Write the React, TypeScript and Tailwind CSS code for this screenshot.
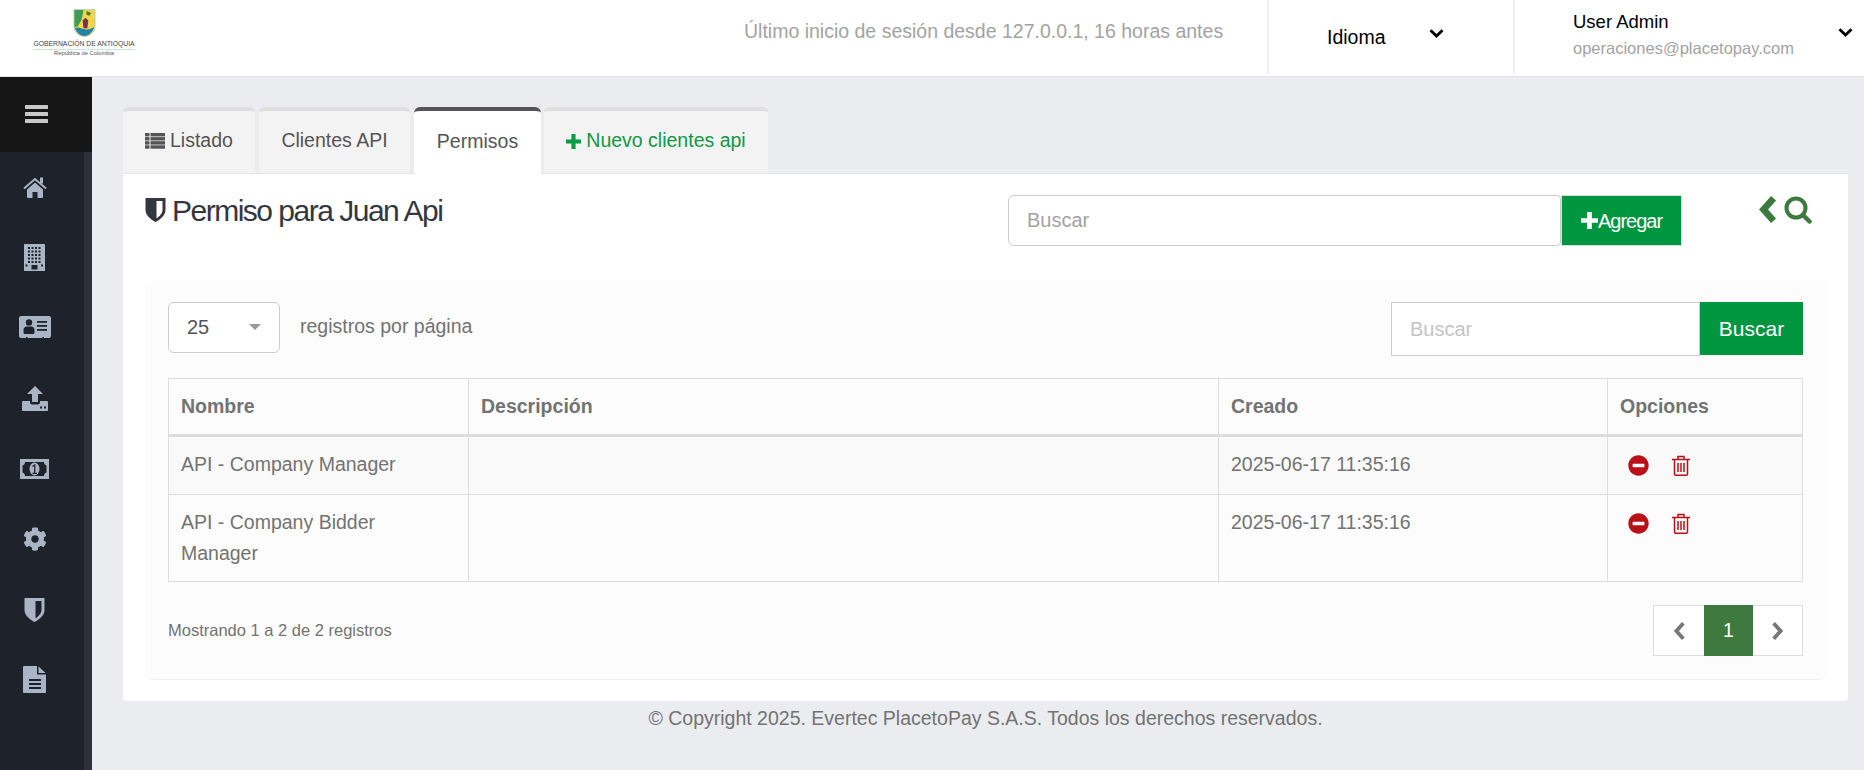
import { FaCog, FaMinusCircle } from 'react-icons/fa'

const rows = [
  { name: 'API - Company Manager', created: '2025-06-17 11:35:16' },
  { name: 'API - Company Bidder Manager', created: '2025-06-17 11:35:16' },
]

const SIDE = '#a9b4c4'
const SIDE_BG = '#1e222b'

const BarsIcon = () => (
  <svg viewBox="0 0 23 18" className="w-[23px] h-[18px] fill-[#c8c8c8]">
    <rect y="0" width="23" height="4" rx="0.500" />
    <rect y="7" width="23" height="4" rx="0.500" />
    <rect y="14" width="23" height="4" rx="0.500" />
  </svg>
)

const HomeIcon = () => (
  <svg viewBox="0 0 24 21" className="w-[24px] h-[21px]" fill={SIDE}>
    <path d="M4 12.500L12 5.500l8 7V20a1 1 0 0 1-1 1h-4.500v-6h-5v6H5a1 1 0 0 1-1-1z" />
    <path d="M1 11.500L12 2l11 9.500" fill="none" stroke={SIDE} strokeWidth="1.900" />
    <rect x="17" y="0.500" width="3" height="6" />
  </svg>
)

const BuildingIcon = () => (
  <svg viewBox="0 0 21 27" className="w-[21px] h-[27px]">
    <rect width="21" height="27" rx="0.500" fill={SIDE} />
    {[3, 6.500, 10, 13.500, 17].map((y) =>
      [4, 7.500, 11, 14.500].map((x) => (
        <rect key={`${x}-${y}`} x={x} y={y} width="2" height="2" fill={SIDE_BG} />
      )),
    )}
    <rect x="1.500" y="20.500" width="2" height="2" fill={SIDE_BG} />
    <rect x="17" y="20.500" width="2" height="2" fill={SIDE_BG} />
    <rect x="7.500" y="21" width="6" height="4.500" fill={SIDE_BG} />
  </svg>
)

const IdCardIcon = () => (
  <svg viewBox="0 0 32 23" className="w-[32px] h-[23px]">
    <path d="M2 0h28a2 2 0 0 1 2 2v18a2 2 0 0 1-2 2h-5v-1h-1.500v1H8.500v-1H7v1H2a2 2 0 0 1-2-2V2a2 2 0 0 1 2-2z" fill={SIDE} />
    <circle cx="10" cy="6.500" r="3.200" fill={SIDE_BG} />
    <path d="M4.500 16.500v-2.500c0-2 1.500-3.500 3-3.500h5c1.500 0 3 1.500 3 3.500v2.500a1.500 1.500 0 0 1-1.500 1.500H6a1.500 1.500 0 0 1-1.500-1.500z" fill={SIDE_BG} />
    <rect x="18" y="5" width="10" height="1.800" fill={SIDE_BG} />
    <rect x="18" y="9" width="10" height="1.800" fill={SIDE_BG} />
    <rect x="18" y="13" width="10" height="1.800" fill={SIDE_BG} />
  </svg>
)

const UploadIcon = () => (
  <svg viewBox="0 0 26 25" className="w-[26px] h-[25px]" fill={SIDE}>
    <path d="M13 0l8 8h-5v8h-6V8H5z" />
    <path d="M1 15h7v1a2.500 2.500 0 0 0 2.500 2.500h5A2.500 2.500 0 0 0 18 16v-1h7a1 1 0 0 1 1 1v8a1 1 0 0 1-1 1H1a1 1 0 0 1-1-1v-8a1 1 0 0 1 1-1z" />
    <rect x="18" y="20.500" width="2" height="2" fill={SIDE_BG} />
    <rect x="22" y="20.500" width="2" height="2" fill={SIDE_BG} />
  </svg>
)

const MoneyIcon = () => (
  <svg viewBox="0 0 29 20" className="w-[29px] h-[20px]">
    <rect width="29" height="20" fill={SIDE} />
    <path d="M5 3h19c0 2 1 3 2.500 3.500v7C25 14 24 15 24 17H5c0-2-1-3-2.500-3.500v-7C4 6 5 5 5 3z" fill={SIDE_BG} />
    <ellipse cx="14.500" cy="10" rx="5" ry="6.500" fill={SIDE} />
    <path d="M12.500 7.500l2.200-1.500v8M12.500 14.300h4.500" fill="none" stroke={SIDE_BG} strokeWidth="1.300" />
  </svg>
)

const ShieldIcon = ({ fill, wedge, className }: { fill: string; wedge: string; className: string }) => (
  <svg viewBox="0 0 21 24" className={className}>
    <path d="M0.500 0H20.500V12C20.500 18 14 22 10.500 24C7 22 0.500 18 0.500 12Z" fill={fill} />
    <path d="M11.500 3H17.500V12C17.500 15.500 14 18.700 11.500 20.300Z" fill={wedge} />
  </svg>
)

const FileIcon = () => (
  <svg viewBox="0 0 23 27" className="w-[23px] h-[27px]">
    <path d="M1 0h13v8.500h9V26a1 1 0 0 1-1 1H1a1 1 0 0 1-1-1V1a1 1 0 0 1 1-1z" fill={SIDE} />
    <path d="M15.500 0.500L22.500 7h-7z" fill={SIDE} />
    <rect x="6" y="13" width="12" height="2" fill={SIDE_BG} />
    <rect x="6" y="17" width="12" height="2" fill={SIDE_BG} />
    <rect x="6" y="21" width="12" height="2" fill={SIDE_BG} />
  </svg>
)

const ThListIcon = () => (
  <svg viewBox="0 0 20 16" className="w-[20px] h-[16px] mr-[5px] fill-[#555555]">
    {[0, 4.100, 8.200, 12.300].map((y) => (
      <g key={y}>
        <rect y={y} width="4.500" height="3.400" />
        <rect x="5.500" y={y} width="14.500" height="3.400" />
      </g>
    ))}
  </svg>
)

const PlusIcon = ({ className }: { className: string }) => (
  <svg viewBox="0 0 16 16" className={className} fill="currentColor">
    <path d="M5.800 0h4.400v5.800H16v4.400h-5.800V16H5.800v-5.800H0V5.800h5.800z" />
  </svg>
)

const ChevronLeft = ({ className, width }: { className: string; width: number }) => (
  <svg viewBox="0 0 16 26" className={className}>
    <path d="M13 3L4 13l9 10" fill="none" stroke="currentColor" strokeWidth={width} />
  </svg>
)

const ChevronRight = ({ className, width }: { className: string; width: number }) => (
  <svg viewBox="0 0 16 26" className={className}>
    <path d="M3 3l9 10-9 10" fill="none" stroke="currentColor" strokeWidth={width} />
  </svg>
)

const ChevronDown = ({ className }: { className: string }) => (
  <svg viewBox="0 0 15 9" className={`w-[15px] h-[9px] ${className}`}>
    <path d="M1.500 1.200l6 5.800 6-5.800" fill="none" stroke="#000000" strokeWidth="2.800" />
  </svg>
)

const SearchIcon = () => (
  <svg viewBox="0 0 28 28" className="w-[28px] h-[28px]">
    <circle cx="12" cy="12" r="9.500" fill="none" stroke="currentColor" strokeWidth="4" />
    <path d="M19.500 19.500l6 6" stroke="currentColor" strokeWidth="4.500" strokeLinecap="round" />
  </svg>
)

const TrashIcon = () => (
  <svg viewBox="0 0 18 21" className="w-[18px] h-[21px]">
    <path d="M0 4.500h18M6 4V1.500h6V4M2.500 4.500V19a1.300 1.300 0 0 0 1.300 1.300h10.400A1.300 1.300 0 0 0 15.500 19V4.500" fill="none" stroke="currentColor" strokeWidth="1.500" />
    <path d="M6 8v9M9 8v9M12 8v9" stroke="currentColor" strokeWidth="1.500" />
  </svg>
)

const Logo = () => (
  <div className="w-[102px] flex flex-col items-center">
    <svg viewBox="0 0 24 29" className="w-[23px] h-[28px]">
      <path d="M1 0.500h22v17c0 7-6 11-11 11s-11-4-11-11z" fill="#f0d64a" stroke="#a9c3cf" strokeWidth="0.800" />
      <path d="M1.500 1H11L9 11l-4 7-3.500 1z" fill="#3f9a5b" />
      <path d="M2 20c3-2 6 0 10 1s7-1 10-2c-1 5-6 9-10 9s-8-3-10-8z" fill="#2481a8" />
      <path d="M10 12l3-3 3 3-1 8h-4z" fill="#7c2f55" />
      <path d="M14 2l5 2-2 3-3-1z" fill="#4d7a2e" />
    </svg>
    <div className="mt-[2px] w-full border-b border-[#c9e4d3] text-center text-[6.800px] leading-[10px] text-[#444] whitespace-nowrap">
      GOBERNACIÓN DE ANTIOQUIA
    </div>
    <div className="text-[5.800px] leading-[7px] text-[#555]">República de Colombia</div>
  </div>
)

const SideItem = ({ children }: { children: React.ReactNode }) => (
  <div className="h-[70.400px] flex items-center justify-center pr-[15px] text-[#a9b4c4]">{children}</div>
)

const Sidebar = () => (
  <aside className="w-[92px] shrink-0 bg-[#1e222b] flex flex-col">
    <div className="h-[75px] pb-[2px] bg-[#161616] flex items-center justify-center pr-[19px]">
      <BarsIcon />
    </div>
    <div className="flex-1 border-r-[8px] border-[#2c303a]">
      <SideItem><HomeIcon /></SideItem>
      <SideItem><BuildingIcon /></SideItem>
      <SideItem><IdCardIcon /></SideItem>
      <SideItem><UploadIcon /></SideItem>
      <SideItem><MoneyIcon /></SideItem>
      <SideItem><FaCog size={24} /></SideItem>
      <SideItem><ShieldIcon fill={SIDE} wedge={SIDE_BG} className="w-[21px] h-[24px]" /></SideItem>
      <SideItem><FileIcon /></SideItem>
    </div>
  </aside>
)

const tabBase = 'h-[66px] pb-[2px] flex items-center border-t-[4px] rounded-t-[6px] text-[19.500px]'

const App = () => {
  return (
    <div className="w-[1864px] h-[770px] overflow-hidden flex flex-col bg-[#ebecef] font-['Liberation_Sans',sans-serif] text-[19.500px] text-[#737373]">
      <header className="h-[77px] shrink-0 bg-white border-b border-[#e4e4e4] flex items-stretch">
        <div className="w-[744px] shrink-0 pl-[33px] pt-[9px]">
          <Logo />
        </div>
        <div className="w-[523px] shrink-0 pt-[17px] text-[#a3a3a3]">
          Último inicio de sesión desde 127.0.0.1, 16 horas antes
        </div>
        <div className="w-[246px] shrink-0 mb-[1px] border-l-2 border-[#f0f0f0] pl-[58px] flex text-black">
          <span className="w-[102px] pt-[23px]">Idioma</span>
          <ChevronDown className="mt-[29px]" />
        </div>
        <div className="flex-1 mb-[1px] border-l-2 border-[#f0f0f0] pl-[58px] pr-[11px] flex justify-between">
          <div>
            <div className="pt-[11px] text-black text-[18.500px] leading-[22px]">User Admin</div>
            <div className="pt-[6px] text-[16.500px] leading-[18px] text-[#a3a3a3]">operaciones@placetopay.com</div>
          </div>
          <ChevronDown className="mt-[28px]" />
        </div>
      </header>

      <div className="flex-1 flex min-h-0">
        <Sidebar />
        <main className="flex-1 pl-[31px] pr-[18px] pt-[30px]">
          <nav className="flex gap-[4px] h-[66px]">
            <div className={`${tabBase} w-[132px] pl-[22px] bg-[#f3f3f3] border-t-[#dedede] text-[#555]`}>
              <ThListIcon />
              Listado
            </div>
            <div className={`${tabBase} w-[151px] justify-center bg-[#f3f3f3] border-t-[#dedede] text-[#555]`}>
              Clientes API
            </div>
            <div className={`${tabBase} relative z-10 h-[67px] w-[127px] justify-center bg-white border-t-[#555555] text-[#555]`}>
              Permisos
            </div>
            <div className={`${tabBase} -ml-[1px] w-[224px] justify-center bg-[#f3f3f3] border-t-[#dedede] text-[#0d9a45]`}>
              <PlusIcon className="w-[15px] h-[15px] mr-[5px]" />
              Nuevo clientes api
            </div>
          </nav>

          <section className="bg-white h-[528px] rounded-b-[4px] border-t border-[#e4e4e4] px-[22px] pt-[19px]">
            <div className="flex items-start h-[88px]">
              <h1 className="w-[863px] shrink-0 flex items-center gap-[6px] text-[30px] leading-[36px] tracking-[-1.500px] text-[#333740]">
                <ShieldIcon fill="#333740" wedge="#ffffff" className="w-[21px] h-[24px] mb-[2px]" />
                Permiso para Juan Api
              </h1>
              <div className="flex pt-[2px]">
                <input
                  placeholder="Buscar"
                  className="w-[553px] h-[51px] border border-[#cccccc] rounded-l-[6px] rounded-r-[4px] px-[18px] text-[20px] placeholder:text-[#a3a3a3] bg-white"
                />
                <button className="w-[121px] h-[51px] bg-[#009640] text-white border border-[#cfe5d7] flex items-center justify-center text-[20px] tracking-[-1px]">
                  <PlusIcon className="w-[17px] h-[17px]" />
                  Agregar
                </button>
              </div>
              <div className="ml-[77px] pt-[2px] flex items-center gap-[7px] text-[#3d7a3e]">
                <ChevronLeft className="w-[18px] h-[29px]" width={6} />
                <SearchIcon />
              </div>
            </div>

            <div className="h-[400px] -mt-[1px] rounded-[8px] bg-[#fcfcfc] border-b border-[#f0f0f0] px-[23px] pt-[22px]">
              <div className="flex justify-between h-[76px] w-[1635px]">
                <div className="flex items-start">
                  <div className="w-[112px] h-[51px] pb-[1px] border border-[#cccccc] rounded-[6px] bg-white flex items-center justify-between px-[18px] text-[20px] text-[#555]">
                    25
                    <span className="w-0 h-0 border-x-[6px] border-x-transparent border-t-[6px] border-t-[#999999]" />
                  </div>
                  <span className="ml-[20px] pt-[10px]">registros por página</span>
                </div>
                <div className="flex items-start">
                  <input
                    placeholder="Buscar"
                    className="w-[309px] h-[54px] border border-[#cccccc] px-[18px] text-[20px] placeholder:text-[#c4c4c4] bg-white"
                  />
                  <button className="w-[103px] h-[53px] bg-[#009640] text-white text-[21px]">Buscar</button>
                </div>
              </div>

              <table className="w-[1635px] table-fixed border-collapse">
                <colgroup>
                  <col className="w-[300px]" />
                  <col className="w-[750px]" />
                  <col className="w-[389px]" />
                  <col className="w-[195px]" />
                </colgroup>
                <thead>
                  <tr className="h-[57px]">
                    {['Nombre', 'Descripción', 'Creado', 'Opciones'].map((h) => (
                      <th key={h} className="border border-[#dddddd] border-b-[3px] px-[12px] text-left font-bold">
                        {h}
                      </th>
                    ))}
                  </tr>
                </thead>
                <tbody>
                  {rows.map((row, i) => (
                    <tr key={row.name} className={i === 0 ? 'bg-[#f9f9f9] h-[59px]' : 'h-[87px]'}>
                      <td className="border border-[#dddddd] pl-[12px] pr-[40px] pt-[12px] align-top leading-[31px]">{row.name}</td>
                      <td className="border border-[#dddddd]" />
                      <td className="border border-[#dddddd] px-[12px] pt-[12px] align-top leading-[31px]">{row.created}</td>
                      <td className="border border-[#dddddd] pl-[20px] pt-[18px] align-top">
                        <div className="flex items-center gap-[23px] text-[#bb1017]">
                          <FaMinusCircle size={21} />
                          <TrashIcon />
                        </div>
                      </td>
                    </tr>
                  ))}
                </tbody>
              </table>

              <div className="flex justify-between mt-[23px] w-[1635px]">
                <span className="pt-[13px] text-[16.500px]">Mostrando 1 a 2 de 2 registros</span>
                <div className="flex h-[51px] w-[150px] border border-[#dddddd] bg-white">
                  <div className="w-[50px] flex items-center justify-center text-[#777]">
                    <ChevronLeft className="w-[13px] h-[20px]" width={5} />
                  </div>
                  <div className="w-[49px] -my-[1px] flex items-center justify-center bg-[#3e7a3f] text-white">1</div>
                  <div className="w-[49px] flex items-center justify-center text-[#777]">
                    <ChevronRight className="w-[13px] h-[20px]" width={5} />
                  </div>
                </div>
              </div>
            </div>
          </section>

          <footer className="pt-[5px] text-center leading-[24px]">
            © Copyright 2025. Evertec PlacetoPay S.A.S. Todos los derechos reservados.
          </footer>
        </main>
      </div>
    </div>
  )
}

export default App
